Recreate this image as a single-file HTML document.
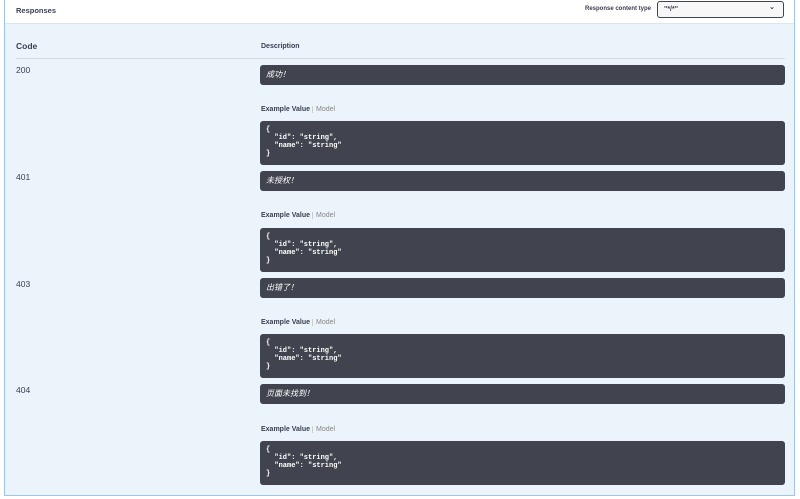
<!DOCTYPE html><html><head><style>
body{margin:0;width:800px;height:499px;background:#fff;font-family:"Liberation Sans","Noto Sans CJK SC",sans-serif;position:relative;overflow:hidden}
.wrap{position:absolute;left:4px;top:-2px;width:791px;height:498px;border:1px solid #9fc4ee;border-top:none;background:#ebf3fb;box-sizing:border-box}
.hdr{position:absolute;left:0;top:0;width:100%;height:26px;background:#fff;border-bottom:1px solid #dbe6f2;box-sizing:border-box}
.a{position:absolute;color:#3b4151}
.box{position:absolute;left:260px;width:525px;background:#41444e;border-radius:3px}
.d{height:20px;color:#fff;font-size:8px;font-style:italic;line-height:20px;box-sizing:border-box;padding-left:6px}
.c{height:44px;color:#fff;font-family:"Liberation Mono",monospace;font-size:7px;font-weight:bold;line-height:8px;padding:5px 6px;box-sizing:border-box;white-space:pre}
.ev{position:absolute;left:261px;font-size:7px;font-weight:bold;color:#3b4151}
.ev span{font-weight:normal;color:#888;border-left:1px solid #ccc;padding-left:3px;margin-left:2px}
.code{position:absolute;left:16px;font-size:8.5px;color:#3b4151}
</style></head><body>
<div class="wrap"><div class="hdr"></div></div>
<div class="a" style="left:16px;top:6px;font-size:7.5px;font-weight:bold">Responses</div>
<div class="a" style="left:585px;top:6px;font-size:6px;font-weight:bold">Response content type</div>
<div style="position:absolute;left:657px;top:1px;width:127px;height:17px;border:1.5px solid #41444e;border-radius:3px;background:#f7f7f7;box-sizing:border-box;font-size:7px;color:#3b4151;padding:3px 6px;font-weight:bold;line-height:9px">"*/*"<span style="position:absolute;right:8px;top:1px">&#8964;</span></div>
<div class="a" style="left:16px;top:41px;font-size:8.5px;font-weight:bold">Code</div>
<div class="a" style="left:261px;top:43px;font-size:7px;font-weight:bold">Description</div>
<div style="position:absolute;left:16px;top:58px;width:769px;height:1px;background:#d3dbe5"></div>

<div class="code" style="top:65px">200</div>
<div class="box d" style="top:65px">成功！</div>
<div class="ev" style="top:106px">Example Value<span>Model</span></div>
<div class="box c" style="top:121px">{
  "id": "string",
  "name": "string"
}</div>

<div class="code" style="top:172px">401</div>
<div class="box d" style="top:171px">未授权！</div>
<div class="ev" style="top:212px">Example Value<span>Model</span></div>
<div class="box c" style="top:228px">{
  "id": "string",
  "name": "string"
}</div>

<div class="code" style="top:279px">403</div>
<div class="box d" style="top:278px">出错了！</div>
<div class="ev" style="top:319px">Example Value<span>Model</span></div>
<div class="box c" style="top:334px">{
  "id": "string",
  "name": "string"
}</div>

<div class="code" style="top:385px">404</div>
<div class="box d" style="top:384px">页面未找到！</div>
<div class="ev" style="top:426px">Example Value<span>Model</span></div>
<div class="box c" style="top:441px">{
  "id": "string",
  "name": "string"
}</div>
</body></html>
